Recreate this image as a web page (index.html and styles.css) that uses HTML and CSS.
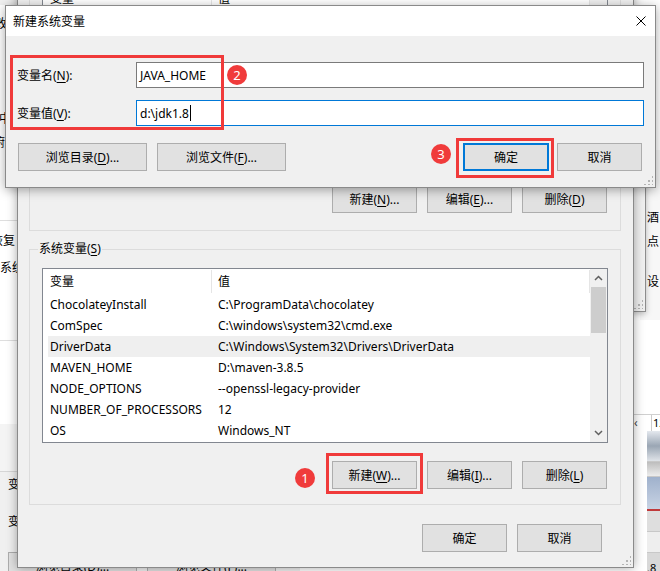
FILE: index.html
```html
<!DOCTYPE html>
<html lang="zh-CN">
<head>
    <meta charset="UTF-8">
    <title>新建系统变量</title>
    <link rel="stylesheet" href="styles.css">
</head>
<body>
<div class="desk">

    <!-- windows far behind -->
    <div class="back-left">
        <div class="bl-cap"></div>
        <div class="bl-top">
            <span class="bl-char c1">改</span>
            <span class="bl-char c2">中</span>
            <span class="bl-char c3">俯</span>
        </div>
        <div class="bl-mid">
            <div class="bl-line shift">恢复</div>
            <div class="bl-line">系统</div>
        </div>
        <div class="bl-low"></div>
    </div>

    <div class="back-dialog">
        <div class="bd-title"></div>
        <div class="bd-field">变量名(N):</div>
        <div class="bd-field">变量值(V):</div>
        <div class="bd-buttons">
            <span class="btn bd-btn">浏览目录(D)...</span>
            <span class="btn bd-btn">浏览文件(F)...</span>
        </div>
    </div>

    <div class="back-right-b">
        <span>酒</span>
        <span>点</span>
        <span class="gap">设</span>
    </div>
    <div class="back-right-a">
        <span class="grip"></span>
    </div>
    <div class="back-right-c">
        <div class="brc-head"><span class="brc-arrow">‹</span><span class="brc-num">12</span></div>
        <div class="brc-pics">
            <div class="pic p1"></div>
            <div class="pic p2"></div>
            <div class="pic p3"></div>
            <div class="pic p4"></div>
            <div class="pic p5"></div>
            <div class="pic p6">.8</div>
        </div>
    </div>

    <!-- 环境变量 window -->
    <div class="env-window">
        <div class="group group-user">
            <div class="list list-user">
                <div class="list-body">
                    <div class="list-head"><span class="c1">变量</span><span class="c2">值</span></div>
                </div>
                <div class="scrollbar"></div>
            </div>
            <div class="btn-row">
                <span class="btn">新建(<u>N</u>)...</span>
                <span class="btn">编辑(<u>E</u>)...</span>
                <span class="btn">删除(<u>D</u>)</span>
            </div>
        </div>

        <div class="group group-sys">
            <span class="legend">系统变量(<u>S</u>)</span>
            <div class="list list-sys">
                <div class="list-body">
                    <div class="list-head"><span class="c1">变量</span><span class="c2">值</span></div>
                    <div class="row"><span class="c1">ChocolateyInstall</span><span class="c2">C:\ProgramData\chocolatey</span></div>
                    <div class="row"><span class="c1">ComSpec</span><span class="c2">C:\windows\system32\cmd.exe</span></div>
                    <div class="row selected"><span class="c1">DriverData</span><span class="c2">C:\Windows\System32\Drivers\DriverData</span></div>
                    <div class="row"><span class="c1">MAVEN_HOME</span><span class="c2">D:\maven-3.8.5</span></div>
                    <div class="row"><span class="c1">NODE_OPTIONS</span><span class="c2">--openssl-legacy-provider</span></div>
                    <div class="row"><span class="c1">NUMBER_OF_PROCESSORS</span><span class="c2">12</span></div>
                    <div class="row"><span class="c1">OS</span><span class="c2">Windows_NT</span></div>
                </div>
                <div class="scrollbar">
                    <span class="arrow">
                        <svg width="9" height="6" viewBox="0 0 9 6"><polyline points="1,5 4.5,1.5 8,5" fill="none" stroke="#606060" stroke-width="1.5"/></svg>
                    </span>
                    <span class="thumb"></span>
                    <span class="track"></span>
                    <span class="arrow">
                        <svg width="9" height="6" viewBox="0 0 9 6"><polyline points="1,1 4.5,4.5 8,1" fill="none" stroke="#606060" stroke-width="1.5"/></svg>
                    </span>
                </div>
            </div>
            <div class="btn-row">
                <span class="btn">新建(<u>W</u>)...</span>
                <span class="btn">编辑(<u>I</u>)...</span>
                <span class="btn">删除(<u>L</u>)</span>
            </div>
        </div>

        <div class="btn-row bottom-row">
            <span class="btn">确定</span>
            <span class="btn">取消</span>
        </div>
        <span class="grip"></span>
    </div>

    <!-- 新建系统变量 dialog -->
    <div class="new-dialog">
        <div class="title-bar">
            <span class="title">新建系统变量</span>
            <svg class="close" width="10" height="10" viewBox="0 0 10 10"><path d="M0.5 0.5 L9.5 9.5 M9.5 0.5 L0.5 9.5" stroke="#000" stroke-width="1"/></svg>
        </div>
        <div class="dlg-body">
            <div class="field">
                <label>变量名(<u>N</u>):</label>
                <div class="input">JAVA_HOME</div>
            </div>
            <div class="field">
                <label>变量值(<u>V</u>):</label>
                <div class="input focus">d:\jdk1.8<span class="caret"></span></div>
            </div>
            <div class="dlg-buttons">
                <span class="btn browse">浏览目录(<u>D</u>)...</span>
                <span class="btn browse">浏览文件(<u>F</u>)...</span>
                <span class="spacer"></span>
                <span class="btn default">确定</span>
                <span class="btn cancel">取消</span>
            </div>
        </div>
        <span class="grip"></span>
    </div>

    <!-- annotations -->
    <div class="mark mark-fields"></div>
    <div class="mark mark-ok"></div>
    <div class="mark mark-new"></div>
    <span class="badge badge-1">1</span>
    <span class="badge badge-2">2</span>
    <span class="badge badge-3">3</span>
</div>
</body>
</html>
```

FILE: styles.css
```css
body {
    margin: 0;
    font-family: "Noto Sans", "Noto Sans CJK SC", sans-serif;
    font-size: 12px;
    color: #000;
    background: #fff;
}

.desk {
    position: relative;
    width: 660px;
    height: 571px;
    overflow: hidden;
    background: #fff;
}

u {
    text-decoration: underline;
    text-underline-offset: 2px;
}

.btn {
    display: flex;
    align-items: center;
    justify-content: center;
    box-sizing: border-box;
    height: 28px;
    width: 85px;
    background: #e1e1e1;
    border: 1px solid #adadad;
    white-space: nowrap;
}

.grip {
    position: absolute;
    right: 2px;
    bottom: 2px;
    width: 10px;
    height: 10px;
    background:
        radial-gradient(circle, #b4b4b4 1px, transparent 1.2px) 0 0 / 4px 4px;
    clip-path: polygon(100% 0, 100% 100%, 0 100%);
}

/* ---------- background windows ---------- */
.back-left {
    position: absolute;
    left: 0;
    top: 0;
    width: 17px;
    height: 424px;
    overflow: hidden;
    background: #fff;
}

.bl-cap {
    height: 5px;
    background: #f0f0f0;
}

.bl-top {
    position: relative;
    height: 215px;
    border-bottom: 1px solid #dedede;
}

.bl-char {
    position: absolute;
    left: -7px;
    font-size: 12px;
}
.bl-char.c1 { top: 9px; }
.bl-char.c2 { top: 104px; }
.bl-char.c3 { top: 128px; }

.bl-mid {
    height: 120px;
    border-bottom: 1px solid #dedede;
    padding-top: 6px;
    box-sizing: border-box;
}

.bl-line {
    height: 27px;
    line-height: 27px;
    white-space: nowrap;
}

.bl-line.shift {
    margin-left: -9px;
}

.bl-low {
    height: 82px;
}

.back-dialog {
    position: absolute;
    left: -120px;
    top: 424px;
    width: 420px;
    height: 160px;
    background: #f0f0f0;
}

.bd-title {
    height: 47px;
    background: #f4f4f4;
    border-bottom: 1px solid #d6d6d6;
}

.bd-field {
    height: 37px;
    line-height: 26px;
    padding-left: 128px;
}

.bd-buttons {
    display: flex;
    gap: 10px;
    padding-left: 128px;
    margin-top: 6px;
}

.bd-btn {
    width: 129px;
}

.back-right-b {
    position: absolute;
    left: 640px;
    top: 150px;
    width: 40px;
    height: 170px;
    background: #f7f7f7;
    display: flex;
    flex-direction: column;
    padding: 56px 0 0 7px;
    box-sizing: border-box;
    line-height: 24px;
}

.back-right-b .gap {
    margin-top: 16px;
}

.back-right-a {
    position: absolute;
    left: 590px;
    top: 150px;
    width: 56px;
    height: 162px;
    background: #f0f0f0;
    border: 1px solid #8d8d8d;
    box-sizing: border-box;
    box-shadow: 0 2px 6px rgba(0, 0, 0, .25);
}

.back-right-c {
    position: absolute;
    left: 630px;
    top: 414px;
    width: 40px;
    height: 160px;
    background: #fff;
    border-top: 1px solid #d0d0d0;
}

.brc-head {
    display: flex;
    height: 16px;
    line-height: 16px;
}

.brc-arrow {
    width: 17px;
    padding-left: 4px;
    color: #444;
}

.brc-num {
    font-size: 11px;
    border-left: 1px solid #ccc;
    padding-left: 1px;
}

.brc-pics {
    margin-left: 17px;
    display: flex;
    flex-direction: column;
}

.pic { border-bottom: 1px solid #c8c8c8; }
.pic.p1 { height: 30px; background: linear-gradient(#e4e8ee, #9aa6b4 50%, #dfe3e8); }
.pic.p2 { height: 14px; background: linear-gradient(#bdbdbd, #ececec); }
.pic.p3 { height: 32px; background: linear-gradient(#9fb1cc, #c8d3e4); border-bottom: 2px solid #c0393b; }
.pic.p4 { height: 20px; background: #dedede; }
.pic.p5 { height: 20px; background: #eeeeee; }
.pic.p6 { height: 30px; background: #d8d8d8; font-size: 11px; line-height: 30px; }

/* ---------- 环境变量 window ---------- */
.env-window {
    position: absolute;
    left: 17px;
    top: -40px;
    width: 617px;
    height: 608px;
    box-sizing: border-box;
    padding: 0 12px 0 11px;
    background: #f0f0f0;
    border: 1px solid #8a8a8a;
    box-shadow: 0 0 10px rgba(0, 0, 0, .35);
}

.group {
    position: relative;
    border: 1px solid #dcdcdc;
    padding: 0 12px 0 12px;
}

.group-user {
    margin-top: 14px;
    padding-top: 9px;
    padding-bottom: 17px;
}

.group-sys {
    margin-top: 18px;
    padding-top: 18px;
    padding-bottom: 15px;
}

.legend {
    position: absolute;
    left: 8px;
    top: -9px;
    line-height: 16px;
    padding: 0 1px;
    background: #f0f0f0;
}

.list {
    display: flex;
    box-sizing: border-box;
    border: 1px solid #828790;
    background: #fff;
}

.list-user { height: 185px; }
.list-sys { height: 175px; }

.list-body {
    flex: 1;
    padding-left: 5px;
    overflow: hidden;
}

.list-head,
.row {
    display: flex;
    align-items: center;
    white-space: nowrap;
}

.list-head {
    height: 25px;
}

.row {
    height: 21px;
}

.row.selected {
    background: #efefef;
}

.c1 {
    width: 164px;
    padding-left: 2px;
    box-sizing: border-box;
}

.c2 {
    flex: 1;
    padding-left: 6px;
}

.list-head .c1,
.list-head .c2 {
    height: 23px;
    line-height: 23px;
    border-right: 1px solid #e5e5e5;
}

.list-head .c1 {
    width: 164px;
}

.scrollbar {
    width: 17px;
    display: flex;
    flex-direction: column;
    background: #f0f0f0;
}

.arrow {
    height: 18px;
    display: flex;
    align-items: center;
    justify-content: center;
}

.thumb {
    height: 46px;
    margin: 0 1px;
    background: #cdcdcd;
}

.track {
    flex: 1;
}

.btn-row {
    display: flex;
    justify-content: flex-end;
    gap: 10px;
    margin-top: 15px;
    padding-right: 1px;
}

.group-sys .btn-row {
    margin-top: 18px;
}

.bottom-row {
    margin-top: 19px;
    padding-right: 19px;
}

/* ---------- 新建系统变量 dialog ---------- */
.new-dialog {
    position: absolute;
    left: 5px;
    top: 5px;
    width: 651px;
    height: 183px;
    box-sizing: border-box;
    background: #f0f0f0;
    border: 1px solid #8a8a8a;
    box-shadow: 0 2px 10px rgba(0, 0, 0, .35);
}

.title-bar {
    display: flex;
    align-items: center;
    justify-content: space-between;
    height: 30px;
    padding: 0 9px 0 7px;
    background: #fff;
}

.title {
    font-size: 12px;
}

.dlg-body {
    padding: 26px 11px 0 11px;
}

.field {
    display: flex;
    align-items: center;
    margin-bottom: 12px;
}

.field label {
    width: 119px;
}

.input {
    flex: 1;
    height: 26px;
    box-sizing: border-box;
    border: 1px solid #7a7a7a;
    background: #fff;
    padding-left: 3px;
    display: flex;
    align-items: center;
}

.input.focus {
    border-color: #0078d7;
}

.caret {
    width: 1px;
    height: 16px;
    margin-left: 1px;
    background: #000;
}

.dlg-buttons {
    display: flex;
    margin-top: 17px;
    padding: 0 2px 0 1px;
    gap: 10px;
}

.btn.browse {
    width: 129px;
}

.spacer {
    flex: 1;
}

.btn.default {
    width: 86px;
    border: 2px solid #0078d7;
}

.btn.cancel {
    margin-left: -2px;
}

/* ---------- annotations ---------- */
.mark {
    position: absolute;
    box-sizing: border-box;
    border: 3px solid #f03a3a;
}

.mark-fields { left: 10px; top: 55px; width: 214px; height: 75px; }
.mark-ok { left: 456px; top: 138px; width: 98px; height: 40px; }
.mark-new { left: 326px; top: 453px; width: 97px; height: 41px; }

.badge {
    position: absolute;
    width: 20px;
    height: 20px;
    border-radius: 50%;
    background: #f03b3b;
    color: #fff;
    font-size: 13px;
    line-height: 20px;
    text-align: center;
}

.badge-1 { left: 295px; top: 468px; }
.badge-2 { left: 227px; top: 65px; }
.badge-3 { left: 431px; top: 144px; }
```
